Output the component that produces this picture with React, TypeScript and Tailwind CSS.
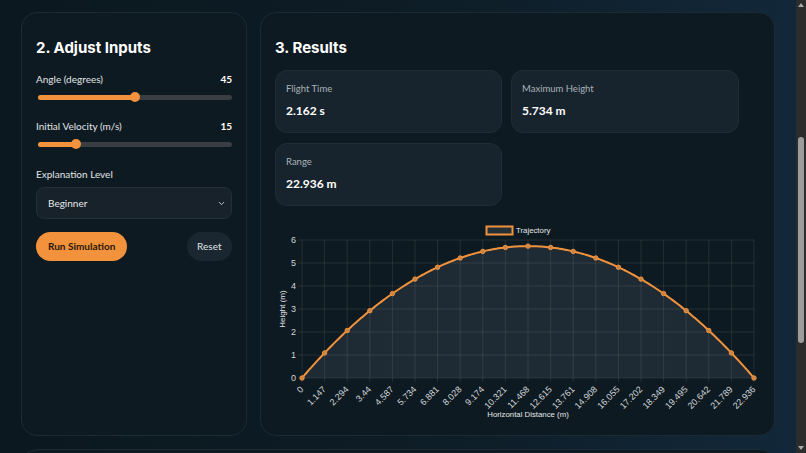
import { ChevronDown } from "lucide-react";

const ORANGE = "#f2923c";

// chart geometry (svg coords)
const X0 = 27;
const X1 = 479;
const YTOP = 21;
const Y0 = 159;
const RANGE = 22.936;
const TICKS = Array.from({ length: 21 }, (_, i) => i);
const TICK_LABELS = [
  "0", "1.147", "2.294", "3.44", "4.587", "5.734", "6.881", "8.028", "9.174", "10.321",
  "11.468", "12.615", "13.761", "14.908", "16.055", "17.202", "18.349", "19.495",
  "20.642", "21.789", "22.936",
];

const height = (x: number) => Math.max(0, x - (9.81 * x * x) / 225);
const px = (x: number) => X0 + (x / RANGE) * (X1 - X0);
const py = (y: number) => Y0 - (y / 6) * (Y0 - YTOP);

const Slider = ({ label, value, min, max, top }: { label: string; value: number; min: number; max: number; top: string }) => {
  const r = (value - min) / (max - min);
  return (
    <div className={`flex flex-col ${top}`}>
      <div className="flex items-center justify-between text-[10px] leading-4 text-[#e1e5e8]">
        <span>{label}</span>
        <span className="font-bold text-white">{value}</span>
      </div>
      <div className="relative mt-[5px] h-[10px] w-full">
        <div className="absolute left-[2px] right-0 top-[3px] h-[5px] rounded-full bg-[#3a3e42]" />
        <div
          className="absolute left-[2px] top-[3px] h-[5px] rounded-full"
          style={{ width: `calc(${r} * (100% - 12px) + 5px)`, background: ORANGE }}
        />
        <div
          className="absolute top-0 h-[10px] w-[10px] rounded-full"
          style={{ left: `calc(${r} * (100% - 12px) + 2px)`, background: ORANGE }}
        />
      </div>
    </div>
  );
};

const Stat = ({ label, value }: { label: string; value: string }) => (
  <div className="flex h-[63px] flex-col rounded-xl border border-[#1f2d36] bg-[#18242d] px-[10px] pt-[11px]">
    <span className="text-[9.5px] leading-[14px] text-[#a9b3ba]">{label}</span>
    <span className="mt-[7px] text-[12px] font-bold leading-4 text-white">{value}</span>
  </div>
);

const TrajectoryChart = () => {
  const curve: string[] = [];
  for (let i = 0; i <= 200; i++) {
    const x = (RANGE * i) / 200;
    curve.push(`${px(x).toFixed(2)},${py(height(x)).toFixed(2)}`);
  }
  const area = `M${X0},${Y0} L${curve.join(" L")} L${X1},${Y0} Z`;

  return (
    <svg width="485" height="204" viewBox="0 0 485 204" className="block" style={{ fontFamily: "'Liberation Sans', Arial, sans-serif" }}>
      {/* grid */}
      {[0, 1, 2, 3, 4, 5, 6].map((v) => (
        <line key={v} x1={X0 - 4} x2={X1} y1={py(v)} y2={py(v)} stroke="rgba(255,255,255,0.09)" strokeWidth="1" />
      ))}
      {TICKS.map((i) => (
        <line key={i} x1={px((RANGE * i) / 20)} x2={px((RANGE * i) / 20)} y1={YTOP} y2={Y0 + 4} stroke="rgba(255,255,255,0.09)" strokeWidth="1" />
      ))}
      {/* fill */}
      <path d={area} fill="rgba(160,175,190,0.12)" />
      <polyline points={curve.join(" ")} fill="none" stroke={ORANGE} strokeWidth="2" />
      {TICKS.map((i) => {
        const x = (RANGE * i) / 20;
        return <circle key={i} cx={px(x)} cy={py(height(x))} r="2.2" fill="#c98446" stroke={ORANGE} strokeWidth="1" />;
      })}
      {/* y labels */}
      {[0, 1, 2, 3, 4, 5, 6].map((v) => (
        <text key={v} x={21} y={py(v) + 3} fontSize="9" textAnchor="end" fill="#d0d5da">
          {v}
        </text>
      ))}
      {/* x labels */}
      {TICKS.map((i) => {
        const x = px((RANGE * i) / 20) + 2;
        const y = Y0 + 12;
        return (
          <text key={i} x={x} y={y} fontSize="9" textAnchor="end" fill="#d0d5da" transform={`rotate(-45 ${x} ${y})`}>
            {TICK_LABELS[i]}
          </text>
        );
      })}
      <text x={10} y={90} fontSize="8" textAnchor="middle" fill="#e3e7ea" transform="rotate(-90 10 90)">
        Height (m)
      </text>
      <text x={253} y={198} fontSize="7.8" textAnchor="middle" fill="#e3e7ea">
        Horizontal Distance (m)
      </text>
      {/* legend */}
      <rect x={211.5} y={7.5} width={26} height={8} fill="rgba(160,175,190,0.15)" stroke={ORANGE} strokeWidth="2" />
      <text x={241} y={14} fontSize="7.8" fill="#e3e7ea">
        Trajectory
      </text>
    </svg>
  );
};

const Scrollbar = () => (
  <div className="relative h-full w-[10px] bg-[#2c2c2c]">
    <div className="absolute left-1/2 top-[3px] h-0 w-0 -translate-x-1/2 border-x-[3px] border-b-[4px] border-x-transparent border-b-[#a8a8a8]" />
    <div className="absolute left-[2px] top-[137px] h-[206px] w-[6px] rounded-full bg-[#9c9c9c]" />
    <div className="absolute bottom-[3px] left-1/2 h-0 w-0 -translate-x-1/2 border-x-[3px] border-t-[4px] border-x-transparent border-t-[#a8a8a8]" />
  </div>
);

const App = () => {
  return (
    <div className="flex h-[453px] overflow-hidden" style={{ fontFamily: "Lato, 'Noto Sans', sans-serif" }}>
      <main className="flex-1 overflow-hidden bg-gradient-to-r from-[#0b1820] via-[#0d1c25] to-[#12283a]">
        <div className="mx-auto flex w-[754px] flex-col gap-[13px] pt-[12px]">
          <div className="grid grid-cols-[226px_1fr] gap-[13px]">
            {/* inputs */}
            <section className="flex h-[424px] flex-col rounded-2xl border border-[#1b2a33] bg-[#0e1a21] px-[14px] pt-[23px]">
              <h2 className="text-[15px] font-bold leading-6 text-white" style={{ fontFamily: "Inter, sans-serif" }}>
                2. Adjust Inputs
              </h2>
              <Slider label="Angle (degrees)" value={45} min={0} max={90} top="mt-[11px]" />
              <Slider label="Initial Velocity (m/s)" value={15} min={5} max={60} top="mt-[16px]" />
              <span className="mt-[17px] text-[10px] leading-4 text-[#e1e5e8]">Explanation Level</span>
              <div className="mt-[5px] flex h-[32px] items-center justify-between rounded-lg border border-[#222f38] bg-[#17222a] pl-[11px] pr-[5px] text-[10px] text-[#e4e8eb]">
                <span>Beginner</span>
                <ChevronDown size={9} strokeWidth={2.5} className="text-[#c9ced2]" />
              </div>
              <div className="mt-[13px] flex items-center justify-between">
                <button className="h-[29px] rounded-full bg-[#f2923c] px-[12px] text-[10px] font-bold text-[#2a1606]">
                  Run Simulation
                </button>
                <button className="h-[29px] rounded-full bg-[#1b2730] px-[10.5px] text-[10px] text-[#dfe4e7]">Reset</button>
              </div>
            </section>

            {/* results */}
            <section className="flex h-[424px] flex-col rounded-2xl border border-[#1b2a33] bg-[#0e1a21] px-[14px] pt-[23px]">
              <h2 className="text-[15px] font-bold leading-6 text-white" style={{ fontFamily: "Inter, sans-serif" }}>
                3. Results
              </h2>
              <div className="mt-[10px] grid grid-cols-[227px_228px] gap-x-[9px] gap-y-[10px]">
                <Stat label="Flight Time" value="2.162 s" />
                <Stat label="Maximum Height" value="5.734 m" />
                <Stat label="Range" value="22.936 m" />
              </div>
              <div className="mt-[13px]">
                <TrajectoryChart />
              </div>
            </section>
          </div>

          <div className="h-[190px] rounded-2xl border border-[#1b2a33] bg-[#0e1a21]" />
        </div>
      </main>
      <Scrollbar />
    </div>
  );
};

export default App;
